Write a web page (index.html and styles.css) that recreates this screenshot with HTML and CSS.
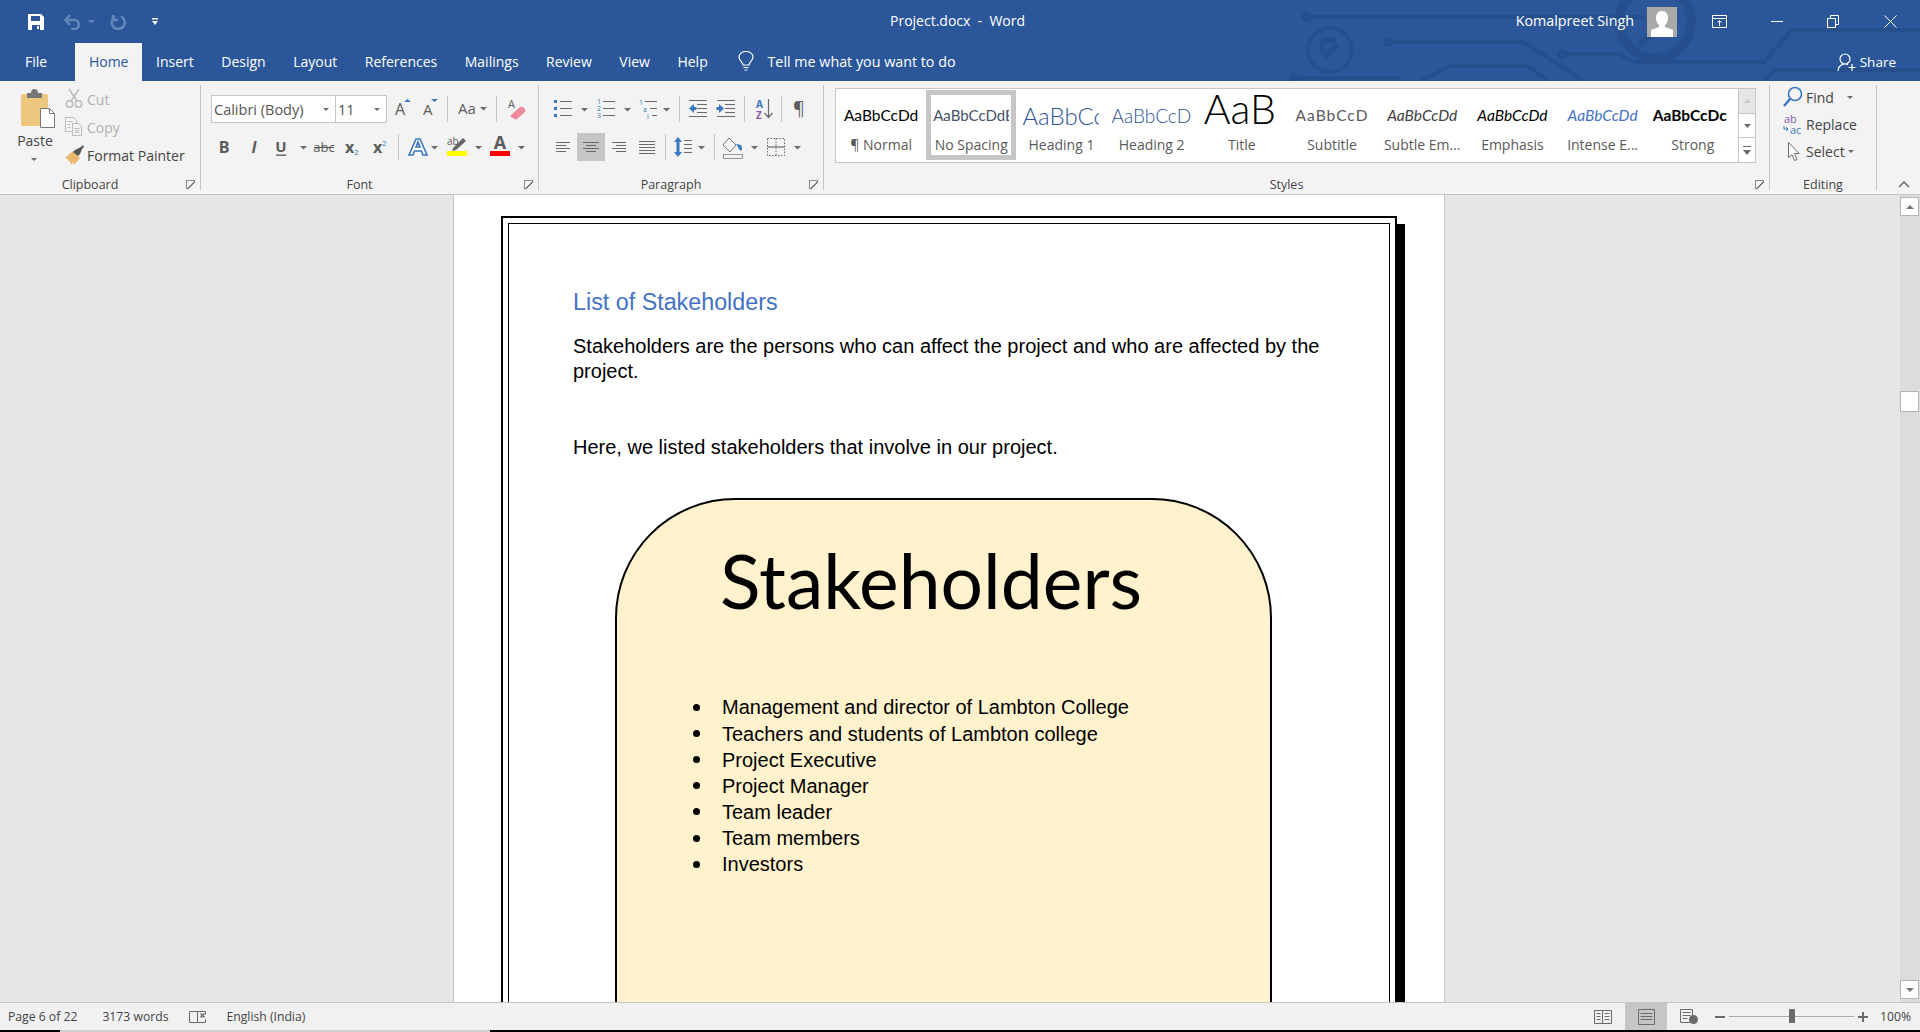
FILE: index.html
```html
<!DOCTYPE html>
<html lang="en">

<head>
	<meta charset="UTF-8">
	<title>Project.docx - Word</title>
	<link rel="stylesheet" href="styles.css">
</head>

<body>

	<header class="head">
		<svg class="circuit" width="1920" height="81" viewBox="0 0 1920 81">
			<g fill="none" stroke="#264f8d" stroke-width="4">
				<circle cx="1306" cy="17" r="3"/>
				<path d="M1309 17H1645"/>
				<circle cx="1330" cy="50" r="22"/>
				<path d="M1324 58L1338 44M1322 40h14M1322 40v14" stroke-width="5"/>
				<circle cx="1388" cy="42" r="3"/>
				<path d="M1391 42H1523L1584 81"/>
				<circle cx="1562" cy="54" r="3"/>
				<path d="M1565 54H1618L1635 62H1764L1792 30H1920"/>
				<path d="M1421 81L1450 66H1528L1548 81"/>
				<circle cx="1294" cy="78" r="3"/>
				<path d="M1297 78H1400"/>
				<circle cx="1655" cy="22" r="36" stroke-width="9"/>
				<path d="M1640 45L1668 18M1650 14h20v20" stroke-width="7"/>
				<path d="M1764 81L1775 70H1920"/>
			</g>
		</svg>

		<div class="titlebar">
			<div class="qat">
				<svg width="16" height="16" viewBox="0 0 16 16"><path fill="#fff" d="M0 0h13l3 3v13H0z"/><path fill="#2b579a" d="M3 2h9v5H3zM4 11h8v5H4z"/><path fill="#fff" d="M9 12h2v3H9z"/></svg>
				<svg class="dim" width="31" height="16" viewBox="0 0 31 16"><path fill="none" stroke="#6487bb" stroke-width="2.4" d="M2 6h10a5 5 0 0 1 0 9H7M6 1L1.500 6 6 11"/><path fill="#6487bb" d="M24 6h7l-3.500 3z"/></svg>
				<svg class="dim" width="17" height="16" viewBox="0 0 17 16"><path fill="none" stroke="#6487bb" stroke-width="2.6" d="M11 2.500a6.500 6.500 0 1 1-6 .3M3 1v5h5"/></svg>
				<svg class="cust" width="6" height="8" viewBox="0 0 6 8"><path fill="#fff" d="M0 0h6v1.500H0zM0 3h6L3 7z"/></svg>
			</div>
			<div class="doctitle">Project.docx &nbsp;-&nbsp; Word</div>
			<div class="account">
				<span class="username">Komalpreet Singh</span>
				<svg class="avatar" width="30" height="30" viewBox="0 0 30 30"><path fill="#a9a9a9" d="M0 0h30v30H0z"/><path fill="#fff" d="M15 4c4 0 6 3 6 7 0 3-1 5-3 7v2l8 3v7H4v-7l8-3v-2c-2-2-3-4-3-7 0-4 2-7 6-7z"/></svg>
				<div class="winbtn"><svg width="16" height="14" viewBox="0 0 16 14"><path fill="none" stroke="#fff" d="M.5 .5h14v12H.5zM.5 3.500h14M7.500 11V6M5.500 7.500l2-2 2 2"/></svg></div>
				<div class="winbtn"><svg width="12" height="2" viewBox="0 0 12 2"><path fill="#fff" d="M0 0h12v1H0z"/></svg></div>
				<div class="winbtn"><svg width="13" height="13" viewBox="0 0 13 13"><path fill="none" stroke="#fff" d="M.5 3.500h8v9h-8zM3.500 3.500v-3h8v9h-3"/></svg></div>
				<div class="winbtn"><svg width="13" height="13" viewBox="0 0 13 13"><path fill="none" stroke="#fff" d="M.5 .5l12 12M12.500 .5l-12 12"/></svg></div>
			</div>
		</div>

		<nav class="tabs">
			<span class="tab file">File</span>
			<span class="tab active">Home</span>
			<span class="tab">Insert</span>
			<span class="tab">Design</span>
			<span class="tab">Layout</span>
			<span class="tab">References</span>
			<span class="tab">Mailings</span>
			<span class="tab">Review</span>
			<span class="tab">View</span>
			<span class="tab">Help</span>
			<span class="tellme">
				<svg width="16" height="20" viewBox="0 0 16 20"><path fill="none" stroke="#fff" stroke-width="1.200" d="M5 14c0-3-4-4-4-8a7 5.500 0 0 1 14 0c0 4-4 5-4 8zM5.500 16.500h5M6.500 19h3"/></svg>
				Tell me what you want to do
			</span>
			<span class="share">
				<svg width="19" height="19" viewBox="0 0 19 19"><path fill="none" stroke="#fff" stroke-width="1.200" d="M8 1a4.500 4.500 0 0 1 0 10 4.500 4.500 0 0 1 0-10zM1 18c0-4 3-7 7-7 1 0 2 .2 3 .6M15 11v7M11.500 14.500h7"/></svg>
				Share
			</span>
		</nav>
	</header>

	<section class="ribbon">

		<div class="group clipboard">
			<div class="group-body">
				<div class="paste">
					<svg width="64" height="45" viewBox="0 0 64 45">
						<path fill="#eec77f" d="M21 11q0-2 2-2h23q2 0 2 2v28q0 2-2 2H23q-2 0-2-2z"/>
						<path fill="#777" d="M27 8h4q0-4 3.500-4T38 8h4v5H27z"/>
						<path fill="#fff" stroke="#777" d="M40.500 23.500h9l5 5v14h-14z"/>
						<path fill="none" stroke="#777" d="M49.500 23.500v5h5"/>
					</svg>
					<span class="paste-label">Paste</span>
					<span class="caret"></span>
				</div>
				<div class="small-col">
					<div class="small-item off">
						<svg width="23" height="28" viewBox="0 0 23 28"><g fill="none" stroke="#bdbdbd" stroke-width="1.600"><circle cx="5.500" cy="19" r="3.200"/><circle cx="14.500" cy="19" r="3.200"/><path d="M5 4l8 12M15 4L7 16"/></g></svg>
						Cut
					</div>
					<div class="small-item off">
						<svg width="23" height="28" viewBox="0 0 23 28"><g fill="#f3f3f3" stroke="#bdbdbd"><path d="M1.500 4.500h8l3 3v11h-11z"/><path d="M8.500 10.500h6l3 3v9h-9z"/><path fill="none" d="M3.500 8.500h5M3.500 11.500h3M3.500 14.500h3M10.500 15.500h5M10.500 17.500h5M10.500 19.500h5"/></g></svg>
						Copy
					</div>
					<div class="small-item">
						<svg width="23" height="28" viewBox="0 0 23 28"><path fill="#e8b96f" d="M1 17l8-7 7 7-6 7-1-3-2 3-1-4-2 1 1-2z"/><path fill="#555" d="M9 11l2-2 6-3 2-2 1 2-2 2-2 5-2 2z"/></svg>
						Format Painter
					</div>
				</div>
			</div>
			<div class="group-label">Clipboard</div>
			<span class="launcher"></span>
		</div>

		<div class="group font">
			<div class="group-body rows">
				<div class="row">
					<div class="combo name">Calibri (Body)<span class="caret"></span></div>
					<div class="combo size">11<span class="caret"></span></div>
					<svg class="ic" width="29" height="28" viewBox="0 0 29 28"><text class="glyph" x="8" y="20" font-size="16">A</text><path class="bl" d="M17 7l3.500-3L24 7z"/></svg>
					<svg class="ic" width="31" height="28" viewBox="0 0 31 28"><text class="glyph" x="7" y="20" font-size="15">A</text><path class="bl" d="M15 4h7l-3.500 3z"/></svg>
					<span class="sep"></span>
					<svg class="ic" width="48" height="28" viewBox="0 0 48 28"><text class="glyph" x="10" y="19" font-size="15">Aa</text><path class="cr" d="M32 12h7l-3.500 3.500z"/></svg>
					<span class="sep"></span>
					<svg class="ic" width="40" height="28" viewBox="0 0 40 28"><text class="glyph" x="11" y="13" font-size="11">A</text><path fill="#ec8a9c" d="M14 20l9-8q1.500-1 3 0l2 2q1 1.500 0 3l-8 7q-1 1-2.500 0L14 22q-1-1 0-2z"/></svg>
				</div>
				<div class="row">
					<svg class="ic" width="29" height="28" viewBox="0 0 29 28"><text class="glyph b" x="13" y="20" font-size="16" text-anchor="middle">B</text></svg>
					<svg class="ic" width="28" height="28" viewBox="0 0 28 28"><text class="glyph bi" x="14" y="20" font-size="16" text-anchor="middle">I</text></svg>
					<svg class="ic" width="43" height="28" viewBox="0 0 43 28"><text class="glyph b" x="13" y="19" font-size="15" text-anchor="middle">U</text><path fill="#555" d="M8 21.500h10v1.300H8z"/><path class="cr" d="M32 13h7l-3.500 3.500z"/></svg>
					<svg class="ic" width="29" height="28" viewBox="0 0 29 28"><text class="glyph" x="13" y="19" font-size="13" text-anchor="middle">abc</text><path fill="#555" d="M3 14h20v1H3z"/></svg>
					<svg class="ic" width="28" height="28" viewBox="0 0 28 28"><text class="glyph b" x="5" y="20" font-size="16">x</text><text class="sub" x="14" y="22" font-size="8">2</text></svg>
					<svg class="ic" width="30" height="28" viewBox="0 0 30 28"><text class="glyph b" x="5" y="20" font-size="16">x</text><text class="sub" x="14" y="13" font-size="8">2</text></svg>
					<span class="sep"></span>
					<svg class="ic" width="44" height="28" viewBox="0 0 44 28"><path fill="#fff" stroke="#3a78bd" stroke-width="1.600" d="M17 6h4l7 16h-4l-1.500-4h-7L14 22h-4zM17 14h4l-2-5z"/><path class="cr" d="M32 13h7l-3.500 3.500z"/></svg>
					<svg class="ic" width="43" height="28" viewBox="0 0 43 28"><text class="glyph" x="4" y="12" font-size="10">ab</text><path fill="#666" d="M10 15l10-10 3 3-10 9-4 1z"/><path fill="#ffff00" d="M4 18h20v5H4z"/><path class="cr" d="M32 13h7l-3.500 3.500z"/></svg>
					<svg class="ic" width="44" height="28" viewBox="0 0 44 28"><text class="glyph b" x="14" y="16" font-size="18" text-anchor="middle">A</text><path fill="#ff0000" d="M4 18h20v5H4z"/><path class="cr" d="M32 13h7l-3.500 3.500z"/></svg>
				</div>
			</div>
			<div class="group-label">Font</div>
			<span class="launcher"></span>
		</div>

		<div class="group para">
			<div class="group-body rows">
				<div class="row">
					<svg class="ic" width="43" height="28" viewBox="0 0 43 28"><path class="bl" d="M6 5h3v3H6zM6 12h3v3H6zM6 19h3v3H6z"/><path class="ln" d="M12 6.500h12M12 13.500h12M12 20.500h12"/><path class="cr" d="M33 13h7l-3.500 3.500z"/></svg>
					<svg class="ic" width="42" height="28" viewBox="0 0 42 28"><text class="sub" x="6" y="9" font-size="7">1</text><text class="sub" x="6" y="16" font-size="7">2</text><text class="sub" x="6" y="23" font-size="7">3</text><path class="ln" d="M12 6.500h12M12 13.500h12M12 20.500h12"/><path class="cr" d="M33 13h7l-3.500 3.500z"/></svg>
					<svg class="ic" width="46" height="28" viewBox="0 0 46 28"><text class="sub" x="6" y="10" font-size="7">1</text><text class="sub" x="10" y="17" font-size="7">a</text><text class="sub" x="14" y="24" font-size="7">i</text><path class="ln" d="M12 6.500h12M17 13.500h7M19 20.500h5"/><path class="cr" d="M30 13h7l-3.500 3.500z"/></svg>
					<span class="sep"></span>
					<svg class="ic" width="31" height="28" viewBox="0 0 31 28"><path class="ln" d="M9 5.500h18M17 9.500h10M17 13.500h10M17 17.500h10M9 21.500h18"/><path class="bl" d="M9 13.500l5-4.500v3h2.500v3H14v3z"/></svg>
					<svg class="ic" width="33" height="28" viewBox="0 0 33 28"><path class="ln" d="M6 5.500h18M14 9.500h10M14 13.500h10M14 17.500h10M6 21.500h18"/><path class="bl" d="M13 13.500L8 9v3H5.500v3H8v3z"/></svg>
					<span class="sep"></span>
					<svg class="ic" width="36" height="28" viewBox="0 0 36 28"><text x="11" y="13" font-size="10" font-weight="700" fill="#3a78bd" class="sans">A</text><text x="11" y="24" font-size="10" font-weight="700" fill="#8a5aa8" class="sans">Z</text><path class="ln" d="M23.500 4v18M19.500 18l4 4.500 4-4.500"/></svg>
					<span class="sep"></span>
					<svg class="ic" width="33" height="28" viewBox="0 0 33 28"><text class="glyph" x="11" y="20" font-size="18">¶</text></svg>
				</div>
				<div class="row">
					<svg class="ic" width="29" height="28" viewBox="0 0 29 28"><path class="ln" d="M8 9.500h14M8 12.500h10M8 15.500h14M8 18.500h10"/></svg>
					<svg class="ic on" width="28" height="28" viewBox="0 0 28 28"><path class="ln" d="M6 9.500h16M9 12.500h10M6 15.500h16M9 18.500h10"/></svg>
					<svg class="ic" width="27" height="28" viewBox="0 0 27 28"><path class="ln" d="M7 9.500h14M11 12.500h10M7 15.500h14M11 18.500h10"/></svg>
					<svg class="ic" width="33" height="28" viewBox="0 0 33 28"><path class="ln" d="M7 8.500h16M7 11.500h16M7 14.500h16M7 17.500h16M7 20.500h16"/></svg>
					<span class="sep"></span>
					<svg class="ic" width="48" height="28" viewBox="0 0 48 28"><path class="bl" d="M12 4l4 5h-2.500v10H16l-4 5-4-5h2.500V9H8z"/><path class="ln" d="M18 7.500h8M18 11.500h8M18 15.500h8M18 19.500h8"/><path class="cr" d="M32 13h7l-3.500 3.500z"/></svg>
					<span class="sep"></span>
					<svg class="ic" width="45" height="28" viewBox="0 0 45 28"><path fill="#f7f7f7" stroke="#777" d="M14 5l7 7-6 7-7-7z"/><path class="bl" d="M21 11l5 1q2 4 0 6-3-2-3-4z"/><path fill="none" stroke="#999" stroke-width="1.200" d="M8.500 21.500h19v4h-19z"/><path class="cr" d="M36 13h7l-3.500 3.500z"/></svg>
					<svg class="ic" width="50" height="28" viewBox="0 0 50 28"><path fill="none" stroke="#6a6a6a" stroke-dasharray="1.500 1.500" d="M7.500 5.500h17v17h-17zM16 5.500v17"/><path class="ln" d="M7.500 14h17"/><path class="cr" d="M34 13h7l-3.500 3.500z"/></svg>
				</div>
			</div>
			<div class="group-label">Paragraph</div>
			<span class="launcher"></span>
		</div>

		<div class="group styles">
			<div class="group-body">
				<div class="gallery">
					<div class="style-list">
						<div class="style"><div class="preview s-normal">AaBbCcDd</div><div class="style-name">¶ Normal</div></div>
						<div class="style selected"><div class="preview s-nospace">AaBbCcDdE</div><div class="style-name">No Spacing</div></div>
						<div class="style"><div class="preview s-h1">AaBbCc</div><div class="style-name">Heading 1</div></div>
						<div class="style"><div class="preview s-h2">AaBbCcD</div><div class="style-name">Heading 2</div></div>
						<div class="style"><div class="preview s-title">AaB</div><div class="style-name">Title</div></div>
						<div class="style"><div class="preview s-subtitle">AaBbCcD</div><div class="style-name">Subtitle</div></div>
						<div class="style"><div class="preview s-subtle">AaBbCcDd</div><div class="style-name">Subtle Em...</div></div>
						<div class="style"><div class="preview s-emph">AaBbCcDd</div><div class="style-name">Emphasis</div></div>
						<div class="style"><div class="preview s-intense">AaBbCcDd</div><div class="style-name">Intense E...</div></div>
						<div class="style"><div class="preview s-strong">AaBbCcDc</div><div class="style-name">Strong</div></div>
					</div>
					<div class="gallery-scroll">
						<div class="gs-btn gs-up"><svg width="7" height="4" viewBox="0 0 7 4"><path fill="#c6c6c6" d="M0 4l3.500-4L7 4z"/></svg></div>
						<div class="gs-btn"><svg width="7" height="4" viewBox="0 0 7 4"><path fill="#6a6a6a" d="M0 0h7L3.500 4z"/></svg></div>
						<div class="gs-btn"><svg width="8" height="9" viewBox="0 0 8 9"><path fill="#6a6a6a" d="M0 0h8v1H0zM0 4h8L4 9z"/></svg></div>
					</div>
				</div>
			</div>
			<div class="group-label">Styles</div>
			<span class="launcher"></span>
		</div>

		<div class="group editing">
			<div class="group-body edit-col">
				<div class="edit-item">
					<svg width="36" height="27" viewBox="0 0 36 27"><circle cx="25" cy="10" r="6.500" fill="none" stroke="#3a78bd" stroke-width="1.600"/><path fill="none" stroke="#3a78bd" stroke-width="2.400" d="M20 15l-6 7"/></svg>
					Find<span class="caret find-caret"></span>
				</div>
				<div class="edit-item">
					<svg width="36" height="27" viewBox="0 0 36 27"><text x="14" y="12" font-size="11" fill="#8a5aa8" class="sans">ab</text><text x="20" y="23" font-size="11" fill="#3a78bd" class="sans">ac</text><path fill="none" stroke="#3a78bd" d="M14 15v3h4M16 16l2 2-2 2"/></svg>
					Replace
				</div>
				<div class="edit-item">
					<svg width="36" height="27" viewBox="0 0 36 27"><path fill="#fff" stroke="#6a6a6a" d="M18.500 4.500v15l3.500-3 2.500 6 2.500-1-2.500-6h4.500z"/></svg>
					Select<span class="caret select-caret"></span>
				</div>
			</div>
			<div class="group-label">Editing</div>
		</div>

		<div class="collapse">
			<svg width="12" height="7" viewBox="0 0 12 7"><path fill="none" stroke="#6a6a6a" stroke-width="1.500" d="M1 6l5-5 5 5"/></svg>
		</div>
	</section>

	<main class="workspace">
		<div class="page">
			<div class="frame-outer">
				<div class="frame-inner">
					<h2 class="doc-heading">List of Stakeholders</h2>
					<p class="doc-text">Stakeholders are the persons who can affect the project and who are affected by the project.</p>
					<p class="doc-text here">Here, we listed stakeholders that involve in our project.</p>
					<div class="shape">
						<h1 class="shape-title">Stakeholders</h1>
						<ul class="shape-list">
							<li>Management and director of Lambton College</li>
							<li>Teachers and students of Lambton college</li>
							<li>Project Executive</li>
							<li>Project Manager</li>
							<li>Team leader</li>
							<li>Team members</li>
							<li>Investors</li>
						</ul>
					</div>
				</div>
			</div>
		</div>
		<div class="scrollbar">
			<div class="sb-btn"><span class="tri-up"></span></div>
			<div class="sb-thumb"></div>
			<div class="sb-btn sb-down"><span class="tri-down"></span></div>
		</div>
	</main>

	<footer class="status">
		<span class="st page-no">Page 6 of 22</span>
		<span class="st words">3173 words</span>
		<svg class="st-book" width="18" height="16" viewBox="0 0 18 16"><path fill="none" stroke="#6a6a6a" d="M8.500 2.500h-8v11h8zM8.500 2.500h8v3M8.500 13.500h8v-3"/><path fill="#6a6a6a" d="M11 5l1-1 1.500 1.500L15 4l1 1-1.500 1.500L16 8l-1 1-1.500-1.500L12 9l-1-1 1.500-1.500z"/></svg>
		<span class="st">English (India)</span>
		<div class="views">
			<svg width="18" height="16" viewBox="0 0 18 16"><path fill="none" stroke="#6a6a6a" d="M.5 1.500h17v13H.5zM8.500 1.500v13M2.500 4.500h4M2.500 7.500h4M2.500 10.500h4M10.500 4.500h5M10.500 7.500h5M10.500 10.500h5"/></svg>
			<div class="view-on"><svg width="17" height="16" viewBox="0 0 17 16"><path fill="none" stroke="#6a6a6a" d="M.5 .5h16v15H.5zM2.500 4.500h12M2.500 7.500h12M2.500 10.500h12"/></svg></div>
			<svg width="18" height="15" viewBox="0 0 18 15"><path fill="none" stroke="#6a6a6a" d="M.5 .5h12v13H.5zM2.500 3.500h8M2.500 6.500h8M2.500 9.500h5"/><circle cx="13.500" cy="10.500" r="4.500" fill="#6a6a6a"/></svg>
			<div class="zoom">
				<span class="zoom-minus"></span>
				<div class="slider"><span class="slider-thumb"></span></div>
				<span class="zoom-plus"></span>
				<span class="st zoom-val">100%</span>
			</div>
		</div>
	</footer>
	<div class="edge"><span></span></div>

</body>

</html>
```

FILE: styles.css
```css
* {
	box-sizing: border-box;
}

html,
body {
	height: 1032px;
	margin: 0;
	overflow: hidden;
}

body {
	font-family: "Open Sans", "Noto Sans", sans-serif;
	font-size: 14px;
	color: #444;
	background: #000;
}

svg {
	display: block;
	flex: none;
}

.sans {
	font-family: "Open Sans", sans-serif;
}

/* title bar and tabs */
.head {
	position: relative;
	height: 81px;
	background: #2b579a;
	color: #fff;
}

.circuit {
	position: absolute;
	left: 0;
	top: 0;
}

.titlebar {
	position: relative;
	display: flex;
	align-items: center;
	height: 43px;
}

.qat {
	display: flex;
	align-items: center;
	width: 890px;
	padding-left: 28px;
}

.qat .dim {
	margin-left: 20px;
}

.qat .dim + .dim {
	margin-left: 15px;
}

.qat .cust {
	margin-left: 25px;
}

.doctitle {
	margin-bottom: 3px;
	white-space: nowrap;
}

.account {
	display: flex;
	align-items: center;
	margin-left: auto;
	padding-right: 1px;
}

.username {
	margin-bottom: 3px;
	font-size: 14.300px;
}

.avatar {
	margin: 0 14px 0 13px;
}

.winbtn {
	display: flex;
	align-items: center;
	justify-content: center;
	width: 57px;
	height: 30px;
}

.tabs {
	position: relative;
	display: flex;
	align-items: center;
	height: 38px;
	padding-left: 12px;
}

.tab {
	display: flex;
	align-items: center;
	height: 38px;
	padding: 0 13.750px 2px;
	white-space: nowrap;
}

.tab.file {
	margin-right: 15px;
	padding: 0 13px 2px;
}

.tab.active {
	background: #f3f3f3;
	color: #2b579a;
}

.tellme {
	display: flex;
	align-items: center;
	gap: 13px;
	margin: 0 0 2px 17px;
	font-size: 14.300px;
}

.share {
	display: flex;
	align-items: center;
	gap: 4px;
	margin-left: auto;
	padding-right: 24px;
	font-size: 13.500px;
}

/* ribbon */
.ribbon {
	display: flex;
	height: 114px;
	padding: 4px 0;
	background: #f3f3f3;
	border-bottom: 1px solid #c6c6c6;
}

.group {
	position: relative;
	display: flex;
	flex-direction: column;
	height: 105px;
	border-right: 1px solid #c6c6c6;
}

.group-body {
	flex: 1;
	display: flex;
}

.group-label {
	height: 16px;
	margin-bottom: -3px;
	padding-right: 20px;
	font-size: 12.500px;
	line-height: 16px;
	text-align: center;
}

.launcher {
	position: absolute;
	right: 5px;
	bottom: 1px;
	width: 9px;
	height: 9px;
	border-left: 1px solid #8a8a8a;
	border-top: 1px solid #8a8a8a;
	background: linear-gradient(135deg, transparent 45%, #777 45%, #777 60%, transparent 60%);
}

.caret {
	display: block;
	width: 0;
	height: 0;
	border-left: 3.5px solid transparent;
	border-right: 3.5px solid transparent;
	border-top: 3.5px solid #6a6a6a;
}

.clipboard {
	width: 201px;
}

.paste {
	display: flex;
	flex-direction: column;
	width: 64px;
}

.paste-label {
	width: 70px;
	height: 22px;
	line-height: 22px;
	text-align: center;
}

.paste .caret {
	margin: 6px 0 0 31px;
}

.small-col {
	padding-top: 0;
}

.small-item {
	display: flex;
	align-items: center;
	height: 28px;
	white-space: nowrap;
}

.small-item.off {
	color: #b1b1b1;
}

.font {
	width: 338px;
}

.para {
	width: 285px;
}

.rows {
	flex-direction: column;
	padding-top: 10px;
	gap: 10px;
}

.row {
	display: flex;
	align-items: center;
	height: 28px;
	padding-left: 10px;
}

.para .row {
	padding-left: 9px;
}

.combo {
	display: flex;
	align-items: center;
	justify-content: space-between;
	height: 28px;
	padding: 0 6px 0 2px;
	background: #fff;
	border: 1px solid #c6c6c6;
	font-size: 14.500px;
	color: #555;
}

.combo.name {
	width: 125px;
}

.combo.size {
	width: 52px;
	margin-left: -1px;
}

.sep {
	flex: none;
	width: 1px;
	height: 26px;
	background: #c6c6c6;
}

.ic.on {
	background: #c6c6c6;
}

.glyph {
	font-family: "Open Sans", sans-serif;
	fill: #5c5c5c;
}

.glyph.b {
	font-weight: 700;
}

.glyph.bi {
	font-weight: 700;
	font-style: italic;
}

.sub {
	font-family: "Open Sans", sans-serif;
	fill: #3a78bd;
}

.bl {
	fill: #3a78bd;
}

.cr {
	fill: #6a6a6a;
}

.ln {
	fill: none;
	stroke: #6a6a6a;
	stroke-width: 1.200;
}

.styles {
	width: 946px;
}

.gallery {
	display: flex;
	width: 921px;
	height: 75px;
	margin: 3px 0 0 11px;
	background: #fff;
	border: 1px solid #c6c6c6;
}

.style-list {
	display: flex;
	width: 901px;
	padding-top: 1px;
}

.style {
	flex: none;
	width: 90.200px;
	height: 70px;
	padding: 5px;
	overflow: hidden;
}

.style.selected {
	border: 5px solid #c6c6c6;
	padding: 0;
}

.preview {
	height: 40px;
	overflow: hidden;
	font-family: Lato, "Open Sans", sans-serif;
	font-size: 15.500px;
	line-height: 41px;
	text-align: center;
	white-space: nowrap;
	color: #000;
}

.style-name {
	height: 20px;
	font-size: 14px;
	line-height: 20px;
	text-align: center;
	white-space: nowrap;
	color: #595959;
}

.s-nospace {
	margin-right: 2px;
	padding-left: 2px;
	color: #44546a;
	text-align: left;
	font-size: 15px;
}

.s-h1 {
	margin-right: 3px;
	padding-left: 1px;
	font-size: 24px;
	font-weight: 300;
	color: #2f5496;
	text-align: left;
}

.s-h2 {
	font-size: 19px;
	font-weight: 300;
	color: #2f5496;
	text-align: left;
}

.s-title {
	padding-right: 4px;
	font-size: 41px;
	font-weight: 300;
	line-height: 27px;
}

.s-subtitle {
	color: #595959;
	letter-spacing: 1px;
}

.s-subtle {
	font-style: italic;
	color: #404040;
}

.s-emph {
	font-style: italic;
}

.s-intense {
	font-style: italic;
	color: #4472c4;
}

.s-strong {
	font-weight: 700;
	text-align: left;
}

.gallery-scroll {
	display: flex;
	flex-direction: column;
	width: 18px;
	margin-left: 1px;
	border-left: 1px solid #c6c6c6;
}

.gs-btn {
	display: flex;
	flex: 1;
	align-items: center;
	justify-content: center;
	border-bottom: 1px solid #c6c6c6;
}

.gs-btn:last-child {
	border-bottom: 0;
}

.gs-up {
	background: #e6e6e6;
}

.editing {
	width: 107px;
}

.editing .group-label {
	padding-right: 0;
}

.edit-col {
	flex-direction: column;
	margin-top: -1px;
}

.edit-item {
	display: flex;
	align-items: center;
	height: 27px;
	white-space: nowrap;
}

.find-caret {
	margin-left: 13px;
}

.select-caret {
	margin-left: 3px;
}

.collapse {
	flex: 1;
	display: flex;
	align-items: flex-end;
	padding: 0 0 2px 21px;
}

/* document */
.workspace {
	display: flex;
	height: 808px;
	overflow: hidden;
	background: #e6e6e6;
	border-bottom: 1px solid #c6c6c6;
}

.page {
	flex: none;
	width: 992px;
	height: 1400px;
	margin-left: 453px;
	padding: 21px 0 0 47px;
	background: #fff;
	border-left: 1px solid #c6c6c6;
	border-right: 1px solid #c6c6c6;
}

.frame-outer {
	width: 896px;
	height: 1300px;
	padding: 5px;
	border: 2px solid #000;
	box-shadow: 8px 8px 0 #000;
}

.frame-inner {
	height: 100%;
	padding: 65px 64px 0;
	border: 1px solid #000;
	font-family: "Liberation Sans", Arial, sans-serif;
	color: #000;
}

.doc-heading {
	margin: 0 0 19px;
	font-size: 23.300px;
	font-weight: 400;
	line-height: 26px;
	color: #4472c4;
}

.doc-text {
	margin: 0;
	font-size: 20px;
	line-height: 25.300px;
}

.doc-text.here {
	margin-top: 50.600px;
}

.shape {
	width: 657px;
	height: 800px;
	margin: 38px 0 0 42px;
	background: #fff2cc;
	border: 2px solid #000;
	border-radius: 120px;
}

.shape-title {
	margin: 33px 0 0 103px;
	font-family: Lato, "Open Sans", sans-serif;
	font-size: 75px;
	font-weight: 400;
	line-height: 94px;
}

.shape-list {
	margin: 67px 0 0;
	padding: 0 0 0 105px;
	list-style: none;
	font-size: 20px;
	line-height: 26.100px;
}

.shape-list li {
	display: flex;
	align-items: center;
}

.shape-list li::before {
	content: "";
	flex: none;
	width: 7px;
	height: 7px;
	margin: 0 22px 0 -29px;
	border-radius: 50%;
	background: #000;
}

.scrollbar {
	display: flex;
	flex-direction: column;
	width: 20px;
	height: 807px;
	margin-left: auto;
	padding: 2px 1px 3px 0;
	background: #dcdcdc;
}

.sb-btn {
	display: flex;
	align-items: center;
	justify-content: center;
	height: 19px;
	background: #fff;
	border: 1px solid #b5b5b5;
}

.tri-up,
.tri-down {
	width: 0;
	height: 0;
	border-left: 4.500px solid transparent;
	border-right: 4.500px solid transparent;
}

.tri-up {
	border-bottom: 4.500px solid #777;
}

.tri-down {
	border-top: 4.500px solid #777;
}

.sb-thumb {
	height: 21px;
	margin-top: 175px;
	background: #fff;
	border: 1px solid #b5b5b5;
}

.sb-down {
	margin-top: auto;
}

/* status bar */
.status {
	display: flex;
	align-items: center;
	height: 27px;
	background: #f1f1f1;
}

.st {
	font-size: 12.200px;
	white-space: nowrap;
}

.page-no {
	margin-left: 8px;
}

.words {
	margin-left: 25px;
}

.st-book {
	margin: 0 19px 0 21px;
}

.views {
	display: flex;
	align-items: center;
	margin-left: auto;
	height: 27px;
}

.view-on {
	display: flex;
	align-items: center;
	justify-content: center;
	width: 42px;
	height: 27px;
	margin: 0 13px;
	background: #c6c6c6;
}

.zoom {
	display: flex;
	align-items: center;
	width: 222px;
	padding-left: 17px;
}

.zoom-minus {
	width: 10px;
	height: 2px;
	background: #6a6a6a;
}

.slider {
	position: relative;
	width: 125px;
	height: 1px;
	margin: 0 4px;
	background: #a8a8a8;
}

.slider-thumb {
	position: absolute;
	left: 60px;
	top: -7px;
	width: 6px;
	height: 14px;
	background: #6a6a6a;
}

.zoom-plus {
	width: 10px;
	height: 10px;
	background: linear-gradient(#6a6a6a, #6a6a6a) center / 10px 2px no-repeat, linear-gradient(#6a6a6a, #6a6a6a) center / 2px 10px no-repeat;
}

.zoom-val {
	margin-left: 12px;
}

.edge {
	height: 2px;
	background: #000;
}

.edge span {
	display: block;
	width: 430px;
	height: 2px;
	margin-left: 60px;
	background: #d0d0d0;
}
```
